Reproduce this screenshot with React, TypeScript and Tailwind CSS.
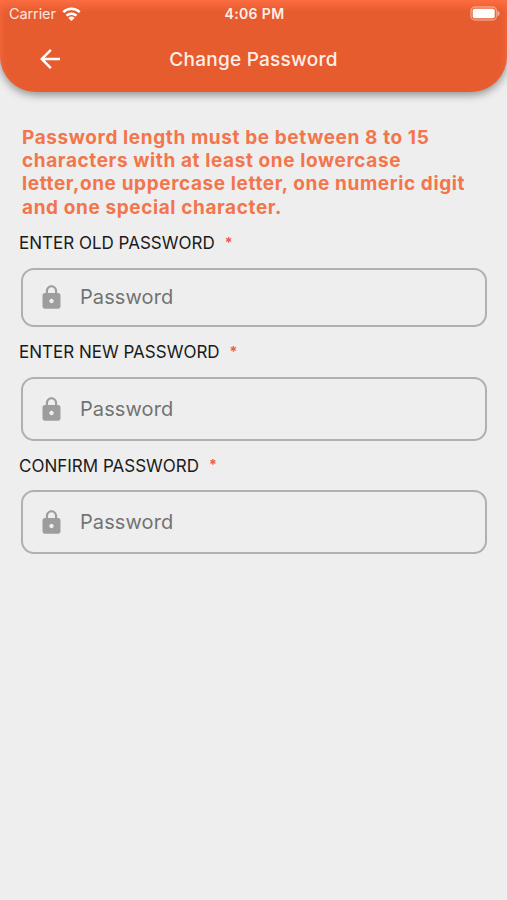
import { MdArrowBack, MdLock } from "react-icons/md";

const fields = [
  { label: "ENTER OLD PASSWORD", box: "h-[59px] mb-[15px]" },
  { label: "ENTER NEW PASSWORD", box: "h-[64px] mb-[14.4px]" },
  { label: "CONFIRM PASSWORD", box: "h-[64px]" },
];

function StatusBar() {
  return (
    <div className="grid h-[27px] grid-cols-3 items-center pl-[9px] pr-[7px] text-white">
      <div className="flex items-center gap-[6px]">
        <span className="text-[14.5px] tracking-[-0.1px] text-white/85">Carrier</span>
        <svg width="19" height="14" viewBox="0 0 19 14" fill="none" stroke="currentColor" strokeWidth="2.5">
          <path d="M1.3 5.2a11.7 11.7 0 0 1 16.4 0" />
          <path d="M4.5 8.7a7.1 7.1 0 0 1 10 0" />
          <path d="M9.5 14 6.4 10.9a4.4 4.4 0 0 1 6.2 0Z" fill="currentColor" stroke="none" />
        </svg>
      </div>
      <span className="text-center text-[14px] font-semibold tracking-[0.35px] text-[#ffeee6]">4:06 PM</span>
      <svg className="justify-self-end" width="30" height="15" viewBox="0 0 30 15">
        <rect x="1" y="1" width="25.5" height="13" rx="4" fill="none" stroke="#fff" strokeOpacity="0.4" strokeWidth="1.5" />
        <rect x="2.7" y="2.8" width="22" height="9.4" rx="1.8" fill="#fff" />
        <path d="M27.5 4.8c2.8 1 2.8 4.4 0 5.4Z" fill="#fff" fillOpacity="0.5" />
      </svg>
    </div>
  );
}

function Header() {
  return (
    <header className="h-[92px] rounded-b-[36px] bg-[#e65c2f] shadow-[0_3px_8px_rgba(0,0,0,0.4),inset_0_6px_10px_-1px_#ff7145]">
      <StatusBar />
      <div className="grid h-16 grid-cols-[100px_1fr_100px] items-center text-[#ffeee6]">
        <MdArrowBack className="ml-[35px] size-[30px] text-white" />
        <h1 className="pt-[2px] text-center text-[19px] font-medium tracking-[0.25px]">Change Password</h1>
      </div>
    </header>
  );
}

export default function App() {
  return (
    <div className="h-[900px] w-[507px] overflow-hidden bg-[#eeeeee] font-['Inter',sans-serif]">
      <Header />
      <main className="pl-[21px] pr-[20px] pt-[34px]">
        <p className="ml-px whitespace-nowrap text-[19px] font-bold leading-[23.2px] tracking-[0.6px] text-[#f3754b]">
          Password length must be between 8 to 15
          <br />
          characters with at least one lowercase
          <br />
          letter,one uppercase letter, one numeric digit
          <br />
          and one special character.
        </p>

        <form className="mt-[14.2px]">
          {fields.map((f) => (
            <div key={f.label}>
              <label className="-ml-[2px] flex h-[22px] items-center text-[17px] text-[#1b1b1b]">
                {f.label}
                <span className="-mt-[3px] ml-[10px] text-[14px] font-bold text-[#f0594c]">*</span>
              </label>
              <div className={`mt-[13px] flex items-center rounded-[13px] border-2 border-[#b0b0b0] pl-[15px] ${f.box}`}>
                <MdLock className="-ml-[0.5px] size-[27px] text-[#9d9d9d]" />
                <input
                  type="password"
                  placeholder="Password"
                  className="-mt-px ml-[15.5px] w-80 bg-transparent text-[20px] tracking-[0.1px] outline-none placeholder:text-[#737373]"
                />
              </div>
            </div>
          ))}
        </form>
      </main>
    </div>
  );
}
